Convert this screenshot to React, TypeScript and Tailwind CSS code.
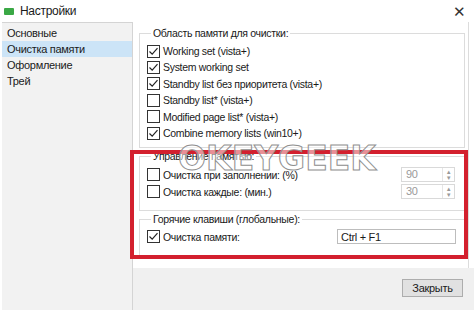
import React from "react";

const font = { fontFamily: '"Liberation Sans", Arial, sans-serif' };

function Check({ checked }: { checked?: boolean }) {
  return (
    <span className="flex h-[13px] w-[13px] shrink-0 items-center justify-center border border-[#333] bg-white">
      {checked && (
        <svg width="11" height="11" viewBox="0 0 11 11">
          <path d="M1.5 5.5 L4.2 8.2 L9.5 2.2" fill="none" stroke="#222" strokeWidth="1.2" />
        </svg>
      )}
    </span>
  );
}

function Row({ label, checked, tall }: { label: string; checked?: boolean; tall?: boolean }) {
  return (
    <div className={`flex items-center gap-[3px] ${tall ? "h-[17px]" : "h-[16.4px]"}`}>
      <Check checked={checked} />
      <span className="leading-none">{label}</span>
    </div>
  );
}

function Spin({ value }: { value: string }) {
  return (
    <div className="flex h-[15px] w-[54px] items-stretch border border-[#d9d9d9] bg-white">
      <span className="flex-1 pl-[4px] text-[11px] leading-[13px] text-[#9a9a9a]">{value}</span>
      <span className="flex w-[12px] flex-col items-center justify-center border-l border-[#e6e6e6] text-[6px] leading-[6px] text-[#999]">
        <span>▲</span>
        <span>▼</span>
      </span>
    </div>
  );
}

function Group({ title, children, className }: { title: string; children: React.ReactNode; className?: string }) {
  return (
    <fieldset className={`border border-[#dcdcdc] pl-[7px] pr-[6px] ${className ?? ""}`}>
      <legend className="ml-[4px] px-[2px] leading-[14px]">{title}</legend>
      {children}
    </fieldset>
  );
}

export default function App() {
  const items = ["Основные", "Очистка памяти", "Оформление", "Трей"];
  return (
    <div
      className="relative flex h-[310px] w-[474px] flex-col overflow-hidden bg-white text-[10.5px] tracking-[-0.3px] text-[#1a1a1a]"
      style={font}
    >
      {/* title bar */}
      <div className="flex h-[22px] shrink-0 items-center pl-[4px] pr-[8px]">
        <span className="mr-[6px] h-[7px] w-[10px] rounded-[1px] bg-[#3aa845]" />
        <span className="text-[12px]">Настройки</span>
        <span className="ml-auto text-[15px] font-light leading-none text-[#333]">✕</span>
      </div>

      <div className="flex flex-1">
        {/* sidebar */}
        <aside className="ml-[2px] flex w-[131px] flex-col border-r border-t border-[#d4d4d4] bg-[#f2f2f2] pt-[2px] text-[11px]">
          {items.map((it, i) => (
            <div
              key={it}
              className={`flex h-[16px] items-center pl-[5px] ${i === 1 ? "bg-[#cce4f7]" : ""}`}
            >
              {it}
            </div>
          ))}
        </aside>

        <div className="flex flex-1 flex-col">
          {/* page */}
          <div className="mr-[5px] ml-[1px] flex h-[246px] flex-col gap-[1px] border-r border-[#dcdcdc] bg-white pl-[5px] pr-[3px] pt-[4px]">
            <Group title="Область памяти для очистки:" className="pb-[6px]">
              <div className="flex flex-col pt-[3px]">
                <Row label="Working set (vista+)" checked />
                <Row label="System working set" checked />
                <Row label="Standby list без приоритета (vista+)" checked />
                <Row label="Standby list* (vista+)" />
                <Row label="Modified page list* (vista+)" />
                <Row label="Combine memory lists (win10+)" checked />
              </div>
            </Group>
            <Group title="Управление памятью:" className="pb-[10px]">
              <div className="flex flex-col pt-[3px]">
                <div className="flex items-center justify-between pr-[3px]">
                  <Row label="Очистка при заполнении: (%)" tall />
                  <Spin value="90" />
                </div>
                <div className="flex items-center justify-between pr-[3px]">
                  <Row label="Очистка каждые: (мин.)" tall />
                  <Spin value="30" />
                </div>
              </div>
            </Group>
            <Group title="Горячие клавиши (глобальные):" className="pb-[10px]">
              <div className="flex items-center justify-between pr-[2px] pt-[2px]">
                <Row label="Очистка памяти:" checked tall />
                <div className="flex h-[15px] w-[119px] items-center border border-[#bdbdbd] bg-white pl-[3px] text-[11px]">
                  Ctrl + F1
                </div>
              </div>
            </Group>
          </div>

          {/* footer */}
          <div className="flex flex-1 items-start justify-end bg-[#f0f0f0] pr-[11px] pt-[11px]">
            <button className="h-[18px] w-[61px] border border-[#adadad] bg-[#e1e1e1] text-[11px]">Закрыть</button>
          </div>
        </div>
      </div>

      {/* highlight overlay */}
      <div className="pointer-events-none absolute left-[130px] top-[150px] h-[109px] w-[338px] border-[4px] border-[#d3202e]" />
      {/* watermark */}
      <div
        className="pointer-events-none absolute left-[178px] top-[134px] text-[33px] font-black tracking-[0px] text-white/50"
        style={{ WebkitTextStroke: "1px #8f8f8f", fontFamily: '"DejaVu Sans", sans-serif' }}
      >
        OKEYGEEK
      </div>
    </div>
  );
}
